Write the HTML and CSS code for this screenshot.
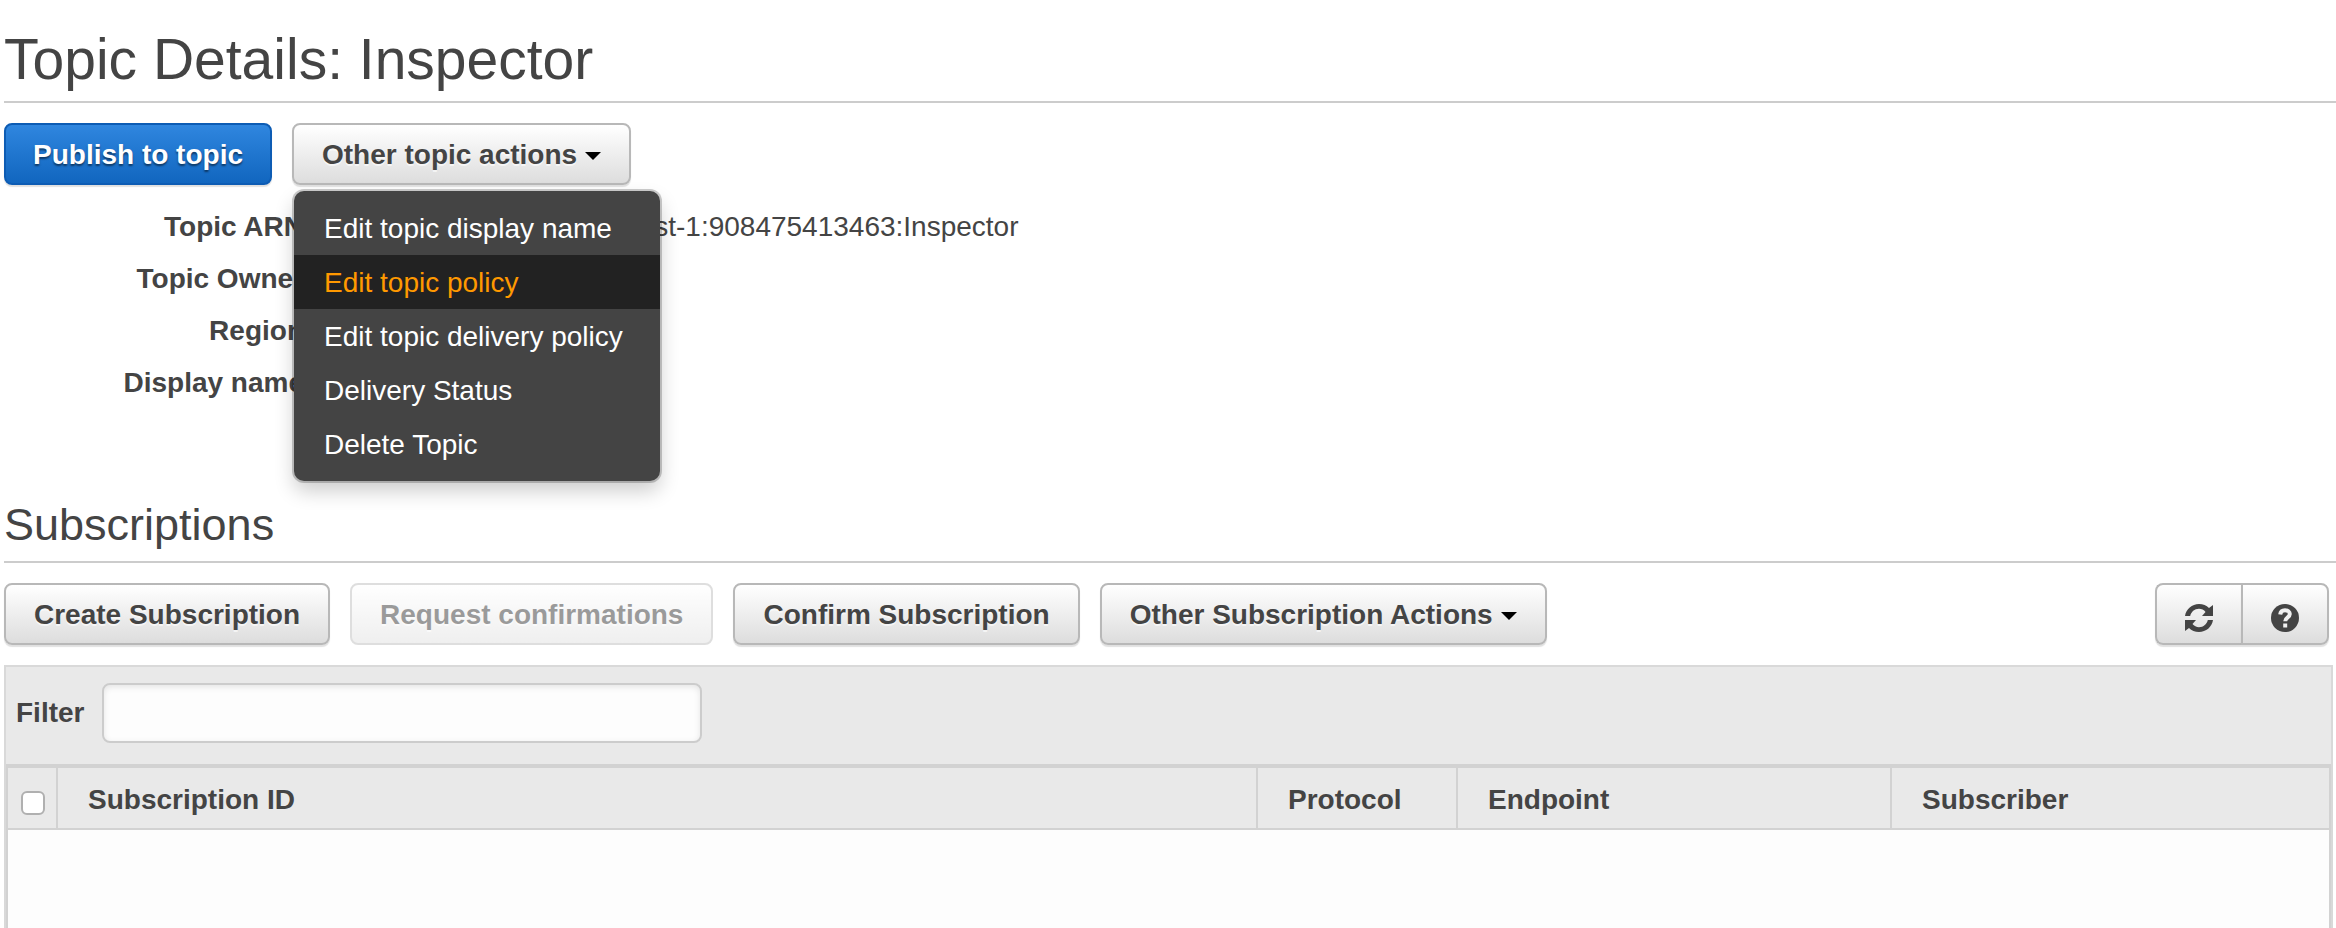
FILE: index.html
```html
<!DOCTYPE html>
<html lang="en">
<head>
<meta charset="utf-8">
<title>Topic Details: Inspector</title>
<link rel="stylesheet" href="styles.css">
</head>
<body>
<main class="page">
  <h1 class="title">Topic Details: Inspector</h1>
  <div class="toolbar">
    <button class="btn btn-primary" type="button">Publish to topic</button>
    <div class="dropdown">
      <button class="btn" type="button" aria-haspopup="true" aria-expanded="true">Other topic actions<span class="caret"></span></button>
      <ul class="menu">
        <li><a class="menu-item" href="#">Edit topic display name</a></li>
        <li><a class="menu-item active" href="#">Edit topic policy</a></li>
        <li><a class="menu-item" href="#">Edit topic delivery policy</a></li>
        <li><a class="menu-item" href="#">Delivery Status</a></li>
        <li><a class="menu-item" href="#">Delete Topic</a></li>
      </ul>
    </div>
  </div>
  <dl class="details">
    <dt>Topic ARN</dt><dd>arn:aws:sns:us-east-1:908475413463:Inspector</dd>
    <dt>Topic Owner</dt><dd></dd>
    <dt>Region</dt><dd></dd>
    <dt>Display name</dt><dd></dd>
  </dl>
  <h2 class="subtitle">Subscriptions</h2>
  <div class="toolbar">
    <button class="btn" type="button">Create Subscription</button>
    <button class="btn" type="button" disabled>Request confirmations</button>
    <button class="btn" type="button">Confirm Subscription</button>
    <button class="btn" type="button" aria-haspopup="true">Other Subscription Actions<span class="caret"></span></button>
    <div class="btn-group">
      <button class="btn btn-icon" type="button" aria-label="Refresh">
        <svg class="icon" viewBox="0 0 28 28" aria-hidden="true"><g id="arrow"><path d="M0 12C1 5 7 0 14 0c4 0 7.500 1.500 10 4L28 1v11H17l3.500-4C19 6 16.500 4.800 14 4.800 9.500 4.800 6 8 5.200 12z" fill="#444"/></g><use href="#arrow" transform="rotate(180 14 14)"/></svg>
      </button>
      <button class="btn btn-icon" type="button" aria-label="Help">
        <svg class="icon" viewBox="0 0 28 28" aria-hidden="true"><circle cx="14" cy="14" r="14" fill="#444"/><path d="M9.200 10.500C9.500 7.500 11.500 6.300 14 6.300c2.800 0 4.800 1.400 4.800 3.800 0 3.400-4.600 3-4.600 7.200" fill="none" stroke="#f0f0f0" stroke-width="4"/><path d="M12.200 19.500h4v4h-4z" fill="#f0f0f0"/></svg>
      </button>
    </div>
  </div>
  <section class="panel">
    <div class="filter">
      <label for="filter">Filter</label>
      <input class="filter-input" id="filter" type="text">
    </div>
    <div class="grid">
      <table class="table">
        <colgroup><col class="col-check"><col><col class="col-protocol"><col class="col-endpoint"><col class="col-subscriber"></colgroup>
        <thead>
          <tr>
            <th class="check-cell"><input class="check" type="checkbox" aria-label="Select all"></th>
            <th>Subscription ID</th>
            <th>Protocol</th>
            <th>Endpoint</th>
            <th>Subscriber</th>
          </tr>
        </thead>
      </table>
    </div>
  </section>
</main>
</body>
</html>
```
FILE: styles.css
```css
* { box-sizing: border-box; }
body {
  margin: 0;
  background: #fff;
  color: #444;
  font: 28px/52px "Helvetica Neue", "Liberation Sans", Arial, sans-serif;
}
.page {
  display: flex;
  flex-direction: column;
  min-height: 100vh;
  padding: 27px 0 0 4px;
}
.title, .subtitle {
  margin: 0 0 20px;
  padding-bottom: 10px;
  border-bottom: 2px solid #ccc;
  font-weight: normal;
}
.title { font-size: 57px; line-height: 64px; }
.subtitle { margin-top: 90px; font-size: 45px; line-height: 52px; }

.toolbar { display: flex; gap: 20px; padding-right: 7px; }
.btn {
  height: 62px;
  padding: 2px 28px 0;
  border: 2px solid #b8b8b8;
  border-radius: 8px;
  background: linear-gradient(#fff, #ddd);
  box-shadow: 0 2px 1px rgba(0, 0, 0, .12);
  color: #444;
  font: bold 28px/56px "Helvetica Neue", "Liberation Sans", Arial, sans-serif;
  text-shadow: 0 2px 0 rgba(255, 255, 255, .6);
  white-space: nowrap;
}
.btn:disabled { opacity: .45; color: #222; box-shadow: none; }
.btn-primary {
  padding: 2px 27px 0;
  border-color: #0d5cb4;
  background: linear-gradient(#2f86df, #1166bf);
  color: #fff;
  text-shadow: 0 2px 2px rgba(0, 0, 0, .5);
}
.caret {
  display: inline-block;
  margin-left: 8px;
  border: 8px solid transparent;
  border-top-color: #000;
  border-bottom-width: 0;
  vertical-align: 4px;
}
.btn-group { display: flex; margin-left: auto; }
.btn-icon { display: flex; align-items: center; padding: 8px 28px 0; }
.btn-icon:first-child { border-right: 0; border-radius: 8px 0 0 8px; }
.btn-icon:last-child { border-radius: 0 8px 8px 0; }
.icon { display: block; width: 28px; height: 28px; }

.dropdown { position: relative; }
.menu {
  position: absolute;
  top: 68px;
  left: 2px;
  min-width: 366px;
  margin: 0;
  padding: 10px 0;
  border-radius: 10px;
  background: #444;
  box-shadow: 0 0 0 2px rgba(0, 0, 0, .2), 0 10px 20px rgba(0, 0, 0, .2);
  list-style: none;
}
.menu-item {
  display: block;
  padding: 2px 30px 0;
  color: #fff;
  text-decoration: none;
  white-space: nowrap;
}
.menu-item.active { background: #222; color: #f90; }

.details {
  display: grid;
  grid-template-columns: 300px 1fr;
  column-gap: 123px;
  grid-auto-rows: 52px;
  margin: 16px 0 0;
}
.details dt { font-weight: bold; text-align: right; }
.details dd { margin: 0; }

.panel {
  display: flex;
  flex: 1;
  flex-direction: column;
  margin: 20px 3px 0 0;
  border: 2px solid #d9d9d9;
  border-bottom: 0;
  background: #e9e9e9;
}
.filter {
  display: flex;
  align-items: center;
  gap: 18px;
  padding: 16px 10px 21px;
  font-weight: bold;
}
.filter-input {
  width: 600px;
  height: 60px;
  padding: 0 12px;
  border: 2px solid #ccc;
  border-radius: 8px;
  background: #fdfdfd;
  box-shadow: inset 0 2px 6px rgba(0, 0, 0, .1);
  font: inherit;
}
.grid {
  flex: 1;
  border: 2px solid #d2d2d2;
  border-top-width: 4px;
  border-bottom: 0;
  background: #fdfdfd;
}
.table { width: 100%; border-collapse: separate; border-spacing: 0; table-layout: fixed; }
.table th {
  height: 62px;
  padding: 4px 0 0 30px;
  border-right: 2px solid #d2d2d2;
  border-bottom: 2px solid #d2d2d2;
  background: #e9e9e9;
  line-height: 56px;
  text-align: left;
}
.table th:last-child { border-right: 0; }
.table .check-cell { padding: 10px 0 0 13px; }
.col-check { width: 50px; }
.col-protocol { width: 200px; }
.col-endpoint { width: 434px; }
.col-subscriber { width: 437px; }
.check {
  display: block;
  width: 24px;
  height: 24px;
  margin: 0;
  border: 2px solid #b0b0b0;
  border-radius: 6px;
  background: #fff;
  appearance: none;
}
```
